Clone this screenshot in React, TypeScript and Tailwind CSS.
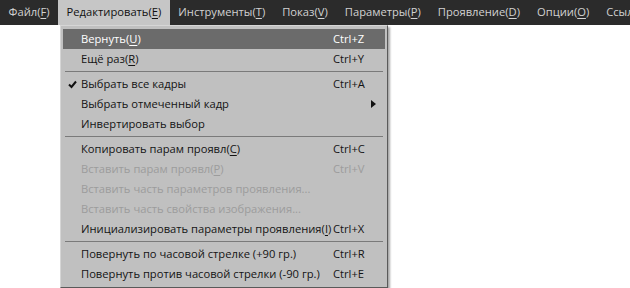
import { useState } from "react";

type Item =
  | { sep: true }
  | {
      sep?: false;
      label: string;
      key?: string;
      shortcut?: string;
      disabled?: boolean;
      checked?: boolean;
      submenu?: boolean;
    };

const topMenus = [
  { label: "Файл", key: "F" },
  { label: "Редактировать", key: "E" },
  { label: "Инструменты", key: "T" },
  { label: "Показ", key: "V" },
  { label: "Параметры", key: "P" },
  { label: "Проявление", key: "D" },
  { label: "Опции", key: "O" },
  { label: "Ссылка", key: "H" },
];

const items: Item[] = [
  { label: "Вернуть", key: "U", shortcut: "Ctrl+Z" },
  { label: "Ещё раз", key: "R", shortcut: "Ctrl+Y" },
  { sep: true },
  { label: "Выбрать все кадры", shortcut: "Ctrl+A", checked: true },
  { label: "Выбрать отмеченный кадр", submenu: true },
  { label: "Инвертировать выбор" },
  { sep: true },
  { label: "Копировать парам проявл", key: "C", shortcut: "Ctrl+C" },
  { label: "Вставить парам проявл", key: "P", shortcut: "Ctrl+V", disabled: true },
  { label: "Вставить часть параметров проявления...", disabled: true },
  { label: "Вставить часть свойства изображения...", disabled: true },
  { label: "Инициализировать параметры проявления", key: "I", shortcut: "Ctrl+X" },
  { sep: true },
  { label: "Повернуть по часовой стрелке (+90 гр.)", shortcut: "Ctrl+R" },
  { label: "Повернуть против часовой стрелки (-90 гр.)", shortcut: "Ctrl+E" },
];

function Accel({ label, k }: { label: string; k?: string }) {
  if (!k) return <>{label}</>;
  return (
    <>
      {label}(<span className="underline underline-offset-2">{k}</span>)
    </>
  );
}

export default function App() {
  const [hover, setHover] = useState(0);

  return (
    <div
      className="w-[630px] h-[288px] bg-white overflow-hidden relative text-[11.2px]"
      style={{ fontFamily: '"Open Sans", "Noto Sans", sans-serif' }}
    >
      <div className="h-[25px] bg-[#2b2b2b] flex items-stretch whitespace-nowrap">
        {topMenus.map((m, i) => (
          <div
            key={m.label}
            className={
              i === 1
                ? "px-[8.5px] flex items-center bg-[#c6c6c6] text-[#111]"
                : "px-[8.5px] flex items-center text-[#d2d2d2]"
            }
          >
            <Accel label={m.label} k={m.key} />
          </div>
        ))}
      </div>

      <div className="absolute left-[60px] top-[25px] w-[328px] bg-[#c0c0c0] border-l border-t border-[#d6d6d6] border-r-[#5a5a5a] border-b-[#5a5a5a] border-r border-b shadow-[2px_2px_2px_rgba(0,0,0,0.35)] py-[3px] px-[2px]">
        {items.map((it, i) =>
          it.sep ? (
            <div key={i} className="h-[5px] flex items-center px-[2px]">
              <div className="w-full h-[1px] bg-[#7a7a7a]" />
            </div>
          ) : (
            <div
              key={i}
              onMouseEnter={() => !it.disabled && setHover(i)}
              className={
                "h-[20px] flex items-center whitespace-nowrap " +
                (hover === i ? "bg-[#6b6b6b] text-white " : "") +
                (it.disabled ? "text-[#9c9c9c]" : hover === i ? "" : "text-[#141414]")
              }
            >
              <div className="w-[18px] flex items-center justify-center">
                {it.checked && (
                  <svg width="9" height="9" viewBox="0 0 9 9">
                    <path d="M1 4.5 L3.5 7 L8 1.5" fill="none" stroke="#111" strokeWidth="2" />
                  </svg>
                )}
              </div>
              <div className="w-[252px]">
                <Accel label={it.label} k={it.key} />
              </div>
              <div className="flex-1">{it.shortcut}</div>
              {it.submenu && (
                <div className="w-[14px] flex items-center">
                  <svg width="5" height="8" viewBox="0 0 5 8">
                    <path d="M0 0 L5 4 L0 8 Z" fill="#111" />
                  </svg>
                </div>
              )}
            </div>
          )
        )}
      </div>
    </div>
  );
}
